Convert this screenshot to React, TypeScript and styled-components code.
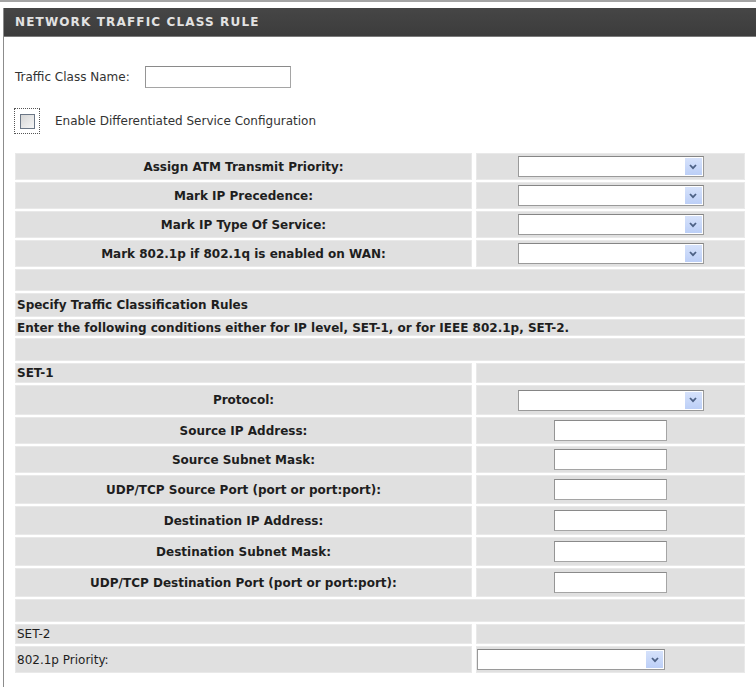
import styled, { createGlobalStyle } from 'styled-components';

const GlobalStyle = createGlobalStyle`
  html, body {
    margin: 0;
    padding: 0;
    background: #ffffff;
    overflow: hidden;
  }
  body {
    font-family: "DejaVu Sans", "Liberation Sans", sans-serif;
    color: #222222;
  }
`;

const Page = styled.div`
  width: 756px;
  height: 687px;
  border-top: 2px solid #a4a4a4;
  box-sizing: border-box;
  padding-top: 6px;
  overflow: hidden;
`;

const Frame = styled.div`
  margin-left: 3px;
  width: 753px;
  height: 679px;
  border-left: 1px solid #8c8c8c;
  box-sizing: border-box;
`;

const Header = styled.div`
  height: 28px;
  background: linear-gradient(#464646, #3c3c3c);
  border-bottom: 1px solid #7a7a7a;
  display: flex;
  align-items: center;
  padding-left: 11px;
  color: #e2e2e2;
  font-size: 12px;
  font-weight: bold;
  letter-spacing: 1.15px;
`;

const Body = styled.div`
  padding: 0 11px;
  width: 730px;
`;

const NameRow = styled.div`
  margin-top: 29px;
  height: 22px;
  display: flex;
  align-items: center;
  gap: 15px;
  font-size: 12px;
  color: #333333;
`;

const TextBox = styled.div<{ $w: number; $h?: number }>`
  width: ${(p) => p.$w}px;
  height: ${(p) => p.$h ?? 21}px;
  box-sizing: border-box;
  background: #ffffff;
  border: 1px solid #a5a5a5;
  border-top-color: #8a8a8a;
  border-left-color: #959595;
`;

const CheckRow = styled.div`
  margin-top: 20px;
  margin-left: -1px;
  height: 26px;
  display: flex;
  align-items: center;
  gap: 15px;
  font-size: 12px;
  color: #333333;
`;

const FocusRing = styled.div`
  width: 26px;
  height: 26px;
  box-sizing: border-box;
  border: 1px dotted #555555;
  display: flex;
  align-items: center;
  justify-content: center;
`;

const CheckBox = styled.div`
  width: 13px;
  height: 13px;
  border: 1px solid #6a7686;
  background: linear-gradient(135deg, #d6d6d6, #f6f6f6);
`;

const Table = styled.div`
  margin-top: 19px;
  display: flex;
  flex-direction: column;
  gap: 2px;
`;

const Row = styled.div<{ $h: number }>`
  height: ${(p) => p.$h}px;
  display: grid;
  grid-template-columns: 457px 269px;
  column-gap: 4px;
`;

const Cell = styled.div<{ $align?: 'left' | 'center'; $bold?: boolean }>`
  background: #e0e0e0;
  box-shadow: inset 0 0 0 1px #e9e9e9;
  display: flex;
  align-items: center;
  justify-content: ${(p) => (p.$align === 'left' ? 'flex-start' : 'center')};
  padding-left: ${(p) => (p.$align === 'left' ? '2px' : '0')};
  font-size: 12px;
  font-weight: ${(p) => (p.$bold ? 'bold' : 'normal')};
  color: #1e1e1e;
  white-space: nowrap;
  overflow: visible;
`;

const WideCell = styled(Cell)`
  grid-column: 1 / span 2;
`;

const InputCell = styled(Cell)<{ $start?: boolean }>`
  justify-content: ${(p) => (p.$start ? 'flex-start' : 'center')};
  padding-left: ${(p) => (p.$start ? '1px' : '0')};
`;

const SelectBox = styled.div<{ $w: number }>`
  width: ${(p) => p.$w}px;
  height: 21px;
  box-sizing: border-box;
  background: #ffffff;
  border: 1px solid #9a9a9a;
  border-top-color: #858585;
  display: flex;
  justify-content: flex-end;
  padding: 1px;
`;

const Arrow = styled.div`
  width: 17px;
  height: 17px;
  background: linear-gradient(#d6e2fb, #bccff7);
  display: flex;
  align-items: center;
  justify-content: center;
`;

const Select = ({ w }: { w: number }) => (
  <SelectBox $w={w}>
    <Arrow>
      <svg width="8" height="6" viewBox="0 0 8 6">
        <polyline points="1,1 4,4.2 7,1" fill="none" stroke="#4d6185" strokeWidth="1.8" />
      </svg>
    </Arrow>
  </SelectBox>
);

const markRows = [
  'Assign ATM Transmit Priority:',
  'Mark IP Precedence:',
  'Mark IP Type Of Service:',
  'Mark 802.1p if 802.1q is enabled on WAN:',
];

const set1Rows: { label: string; h: number }[] = [
  { label: 'Source IP Address:', h: 27 },
  { label: 'Source Subnet Mask:', h: 27 },
  { label: 'UDP/TCP Source Port (port or port:port):', h: 29 },
  { label: 'Destination IP Address:', h: 29 },
  { label: 'Destination Subnet Mask:', h: 29 },
  { label: 'UDP/TCP Destination Port (port or port:port):', h: 29 },
];

const App = () => {
  return (
    <>
      <GlobalStyle />
      <Page>
        <Frame>
          <Header>NETWORK TRAFFIC CLASS RULE</Header>
          <Body>
            <NameRow>
              <span>Traffic Class Name:</span>
              <TextBox $w={146} $h={22} />
            </NameRow>
            <CheckRow>
              <FocusRing>
                <CheckBox />
              </FocusRing>
              <span>Enable Differentiated Service Configuration</span>
            </CheckRow>

            <Table>
              {markRows.map((label) => (
                <Row key={label} $h={27}>
                  <Cell $bold>{label}</Cell>
                  <InputCell>
                    <Select w={186} />
                  </InputCell>
                </Row>
              ))}
              <Row $h={22}>
                <WideCell />
              </Row>
              <Row $h={24}>
                <WideCell $align="left" $bold>
                  Specify Traffic Classification Rules
                </WideCell>
              </Row>
              <Row $h={17}>
                <WideCell $align="left" $bold>
                  Enter the following conditions either for IP level, SET-1, or for IEEE 802.1p, SET-2.
                </WideCell>
              </Row>
              <Row $h={23}>
                <WideCell />
              </Row>

              <Row $h={20}>
                <Cell $align="left" $bold>SET-1</Cell>
                <Cell />
              </Row>
              <Row $h={30}>
                <Cell $bold>Protocol:</Cell>
                <InputCell>
                  <Select w={186} />
                </InputCell>
              </Row>
              {set1Rows.map((r) => (
                <Row key={r.label} $h={r.h}>
                  <Cell $bold>{r.label}</Cell>
                  <InputCell>
                    <TextBox $w={113} />
                  </InputCell>
                </Row>
              ))}
              <Row $h={23}>
                <WideCell />
              </Row>

              <Row $h={20}>
                <Cell $align="left">SET-2</Cell>
                <Cell />
              </Row>
              <Row $h={27}>
                <Cell $align="left">802.1p Priority:</Cell>
                <InputCell $start>
                  <Select w={188} />
                </InputCell>
              </Row>
            </Table>
          </Body>
        </Frame>
      </Page>
    </>
  );
};

export default App;
